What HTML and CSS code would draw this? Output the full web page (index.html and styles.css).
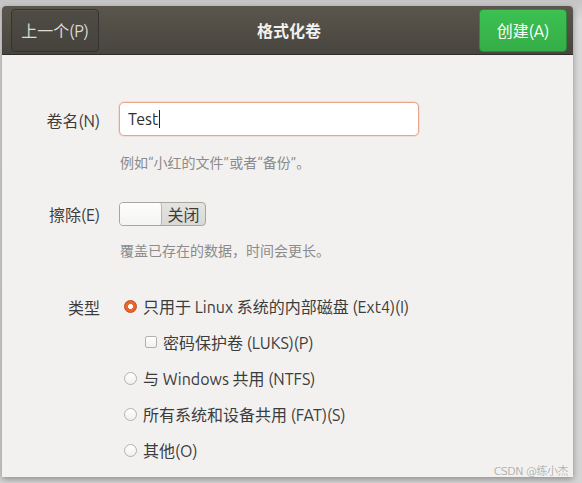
FILE: index.html
```html
<!DOCTYPE html>
<html lang="zh-CN">
<head>
<meta charset="utf-8">
<link rel="stylesheet" href="styles.css">
</head>
<body>
<div class="window">
  <header class="headerbar">
    <button class="hbtn prev">上一个(P)</button>
    <div class="title">格式化卷</div>
    <button class="hbtn create">创建(A)</button>
  </header>
  <main class="content">
    <div class="row row-name">
      <div class="label">卷名(N)</div>
      <div class="control">
        <div class="entry"><span>Test</span><span class="caret"></span></div>
        <div class="hint">例如“小红的文件”或者“备份”。</div>
      </div>
    </div>
    <div class="row row-erase">
      <div class="label">擦除(E)</div>
      <div class="control">
        <div class="switch"><span class="knob"></span><span class="state">关闭</span></div>
        <div class="hint">覆盖已存在的数据，时间会更长。</div>
      </div>
    </div>
    <div class="row row-type">
      <div class="label">类型</div>
      <div class="control options">
        <div class="opt"><span class="radio checked"></span><span>只用于 Linux 系统的内部磁盘 (Ext4)(I)</span></div>
        <div class="opt sub"><span class="check"></span><span>密码保护卷 (LUKS)(P)</span></div>
        <div class="opt"><span class="radio"></span><span>与 Windows 共用 (NTFS)</span></div>
        <div class="opt"><span class="radio"></span><span>所有系统和设备共用 (FAT)(S)</span></div>
        <div class="opt"><span class="radio"></span><span>其他(O)</span></div>
      </div>
    </div>
  </main>
  <div class="watermark">CSDN @练小杰</div>
</div>
</body>
</html>
```
FILE: styles.css
```css
html, body {
  margin: 0;
  padding: 0;
}
body {
  width: 582px;
  height: 483px;
  background: linear-gradient(#c4c4c4, #d9d9d9 20px, #d4d4d4);
  font-family: "Ubuntu", "Noto Sans", "Noto Sans CJK SC", sans-serif;
  font-size: 16px;
  color: #3c3c3c;
  overflow: hidden;
}
.window {
  position: relative;
  margin: 6px 9px 0 2px;
  height: 471px;
  background: #f2f1f0;
  box-shadow: 0 2px 6px rgba(0,0,0,0.35);
  border-radius: 4px 4px 0 0;
}
.headerbar {
  height: 49px;
  display: flex;
  align-items: center;
  justify-content: space-between;
  padding: 0 6px 0 9px;
  background: linear-gradient(#5a564d, #48453f);
  border-bottom: 1px solid #2e2d29;
  border-radius: 4px 4px 0 0;
  box-sizing: border-box;
}
.hbtn {
  height: 43px;
  border-radius: 4px;
  font-family: inherit;
  font-size: 16px;
  padding: 0;
}
.prev {
  width: 88px;
  background: linear-gradient(#4f4c45, #46433d);
  border: 1px solid #35332f;
  color: #dfdbd2;
  box-shadow: inset 0 1px rgba(255,255,255,0.05);
}
.create {
  width: 88px;
  background: linear-gradient(#3cc152, #35ad47);
  border: 1px solid #2a8a38;
  color: #ffffff;
}
.title {
  color: #f2f1ee;
  font-weight: bold;
  font-size: 16px;
}
.content {
  padding-top: 47px;
}
.row {
  display: grid;
  grid-template-columns: 98px 1fr;
  column-gap: 19px;
}
.label {
  text-align: right;
  color: #3c3c3c;
}
.row-name .label { padding-top: 6px; }
.entry {
  width: 300px;
  height: 34px;
  box-sizing: border-box;
  border: 1px solid #e8a48d;
  border-radius: 5px;
  background: #fff;
  box-shadow: 0 0 0 1px rgba(233,84,32,0.12);
  display: flex;
  align-items: center;
  padding-left: 8px;
  color: #2e2e2e;
}
.caret {
  display: inline-block;
  width: 1px;
  height: 18px;
  background: #222;
  margin-left: 1px;
}
.hint {
  color: #8b8b8b;
  font-size: 14px;
  margin-top: 16px;
  padding-left: 1px;
}
.row-erase {
  margin-top: 30px;
}
.row-erase .label { padding-top: 0; }
.switch {
  width: 87px;
  height: 24px;
  box-sizing: border-box;
  border: 1px solid #a8a6a2;
  border-radius: 4px;
  background: linear-gradient(#e6e4e1, #dad8d4);
  display: flex;
  align-items: center;
}
.knob {
  width: 42px;
  height: 22px;
  box-sizing: border-box;
  background: linear-gradient(#fdfdfd, #f4f4f3);
  border-right: 1px solid #b7b5b0;
  border-radius: 3px;
}
.state {
  flex: 1;
  text-align: center;
  font-size: 16px;
  color: #3c3c3c;
}
.row-erase .hint { margin-top: 14px; }
.row-type {
  margin-top: 35px;
}
.options {
  display: flex;
  flex-direction: column;
  gap: 14px;
  padding-left: 5px;
}
.opt {
  display: flex;
  align-items: center;
  gap: 6px;
  height: 22px;
}
.opt.sub {
  padding-left: 21px;
}
.radio {
  width: 13px;
  height: 13px;
  box-sizing: border-box;
  border-radius: 50%;
  border: 1px solid #b3b1ad;
  background: linear-gradient(#ffffff, #f1f0ee);
}
.radio.checked {
  border: 1px solid #c4461a;
  background: radial-gradient(circle, #ffffff 0 2.2px, #e9662f 2.8px);
}
.check {
  width: 12px;
  height: 12px;
  box-sizing: border-box;
  border: 1px solid #b3b1ad;
  border-radius: 2px;
  background: linear-gradient(#ffffff, #f1f0ee);
}
.watermark {
  position: absolute;
  right: 5px;
  bottom: -1px;
  font-size: 11px;
  letter-spacing: -0.5px;
  color: rgba(165,165,165,0.85);
  text-shadow: 0 0 1px rgba(255,255,255,0.8);
  font-family: "DejaVu Sans", "Noto Sans CJK SC", sans-serif;
}
```
